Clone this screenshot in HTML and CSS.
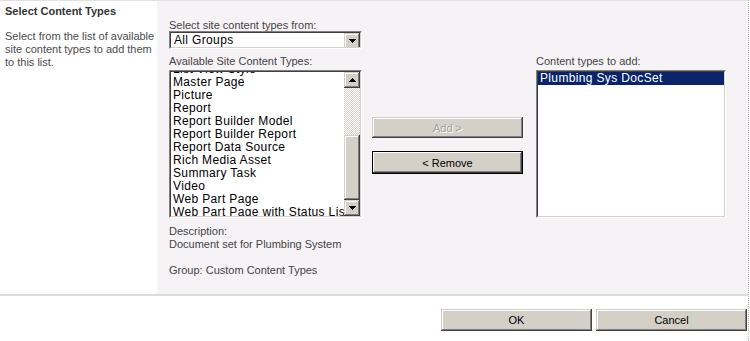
FILE: index.html
```html
<!DOCTYPE html>
<html lang="en">
<head>
    <meta charset="UTF-8">
    <meta name="viewport" content="width=device-width, initial-scale=1.0">
    <title>Add Content Types</title>
    <link rel="stylesheet" href="styles.css">
</head>
<body>
    <div class="page">
        <div class="section">
            <div class="section-info">
                <h3 class="section-title">Select Content Types</h3>
                <p class="section-desc">Select from the list of available site content types to add them to this list.</p>
            </div>
            <div class="section-body">
                <div class="col col-source">
                    <div class="label label-top">Select site content types from:</div>
                    <div class="field dropdown">
                        <div class="field-inner">
                            <span class="dropdown-value">All Groups</span>
                            <span class="sb-btn">
                                <svg width="7" height="4" viewBox="0 0 7 4"><path d="M0 0h7v1h-7z M1 1h5v1h-5z M2 2h3v1h-3z M3 3h1v1h-1z"/></svg>
                            </span>
                        </div>
                    </div>
                    <div class="label label-list">Available Site Content Types:</div>
                    <div class="field listbox">
                        <div class="field-inner">
                            <ul class="items items-scrolled">
                                <li>List View Style</li>
                                <li>Master Page</li>
                                <li>Picture</li>
                                <li>Report</li>
                                <li>Report Builder Model</li>
                                <li>Report Builder Report</li>
                                <li>Report Data Source</li>
                                <li>Rich Media Asset</li>
                                <li>Summary Task</li>
                                <li>Video</li>
                                <li>Web Part Page</li>
                                <li>Web Part Page with Status List</li>
                            </ul>
                            <div class="scrollbar">
                                <span class="sb-btn">
                                    <svg width="7" height="4" viewBox="0 0 7 4"><path d="M3 0h1v1h-1z M2 1h3v1h-3z M1 2h5v1h-5z M0 3h7v1h-7z"/></svg>
                                </span>
                                <span class="sb-track"></span>
                                <span class="sb-thumb"></span>
                                <span class="sb-btn">
                                    <svg width="7" height="4" viewBox="0 0 7 4"><path d="M0 0h7v1h-7z M1 1h5v1h-5z M2 2h3v1h-3z M3 3h1v1h-1z"/></svg>
                                </span>
                            </div>
                        </div>
                    </div>
                    <div class="details">
                        <div>Description:</div>
                        <div>Document set for Plumbing System</div>
                        <div class="details-group">Group: Custom Content Types</div>
                    </div>
                </div>

                <div class="col col-actions">
                    <button class="btn btn-disabled" disabled>Add &gt;</button>
                    <button class="btn btn-default">&lt; Remove</button>
                </div>

                <div class="col col-target">
                    <div class="label label-list">Content types to add:</div>
                    <div class="field listbox">
                        <div class="field-inner">
                            <ul class="items">
                                <li class="selected">Plumbing Sys DocSet</li>
                            </ul>
                        </div>
                    </div>
                </div>
            </div>
        </div>

        <div class="actions">
            <button class="btn btn-wide">OK</button>
            <button class="btn btn-wide">Cancel</button>
        </div>
    </div>
</body>
</html>
```

FILE: styles.css
```css
body {
    margin: 0;
    font-family: "Liberation Sans", Arial, sans-serif;
    font-size: 11px;
    color: #444;
    background: #fff;
}
.page {
    width: 748px;
    height: 341px;
    border-right: 1px dotted #b4b4b4;
}
.section {
    display: flex;
    height: 293px;
    border-top: 1px solid #e2e2e2;
    border-bottom: 2px solid #dcdcdc;
}
.section-info {
    width: 151px;
    padding: 4px 1px 0 5px;
}
.section-title {
    margin: 0;
    font-size: 11px;
    line-height: 13px;
    color: #333;
}
.section-desc {
    margin: 12px 0 0;
    line-height: 13px;
    color: #4c4c4c;
}
.section-body {
    flex: 1;
    display: flex;
    align-items: flex-start;
    background: #f6f3f6;
    padding: 18px 0 0 12px;
}
.col-source {
    width: 193px;
}
.col-actions {
    display: flex;
    flex-direction: column;
    width: 151px;
    margin-left: 10px;
    padding-top: 98px;
}
.col-target {
    width: 190px;
    margin-left: 13px;
    padding-top: 36px;
}
.label {
    line-height: 12px;
    color: #444;
}
.label-list {
    margin-top: 6px;
    margin-bottom: 3px;
}
.col-target .label-list {
    margin-top: 0;
}

/* sunken 3d fields */
.field {
    border: 1px solid;
    border-color: #808080 #fff #fff #808080;
    background: #fff;
}
.field-inner {
    display: flex;
    height: 100%;
    box-sizing: border-box;
    border: 1px solid;
    border-color: #404040 #d4d0c8 #d4d0c8 #404040;
    overflow: hidden;
}
.dropdown {
    height: 18px;
    box-sizing: border-box;
    font-size: 12px;
    letter-spacing: 0.35px;
    color: #000;
}
.dropdown-value {
    flex: 1;
    padding-left: 3px;
    line-height: 14px;
}
.listbox {
    height: 148px;
    box-sizing: border-box;
    font-size: 12px;
    letter-spacing: 0.35px;
    color: #000;
}
.items {
    flex: 1;
    list-style: none;
    margin: 0;
    padding: 0;
    white-space: nowrap;
    overflow: hidden;
}
.items li {
    height: 13px;
    line-height: 13px;
    padding-left: 2px;
}
.items-scrolled {
    margin-top: -9px;
}
.items li.selected {
    background: #0a246a;
    color: #fff;
}

/* classic scrollbar */
.scrollbar {
    display: flex;
    flex-direction: column;
    width: 16px;
}
.sb-btn {
    display: flex;
    align-items: center;
    justify-content: center;
    width: 16px;
    height: 16px;
    flex-shrink: 0;
    background: #d4d0c8;
    box-shadow: inset -1px -1px #404040, inset 1px 1px #d4d0c8, inset -2px -2px #808080, inset 2px 2px #fff;
}
.sb-track {
    height: 47px;
    background-image: repeating-conic-gradient(#d4d0c8 0 25%, #fff 0 50%);
    background-size: 2px 2px;
}
.sb-thumb {
    height: 65px;
    background: #d4d0c8;
    box-shadow: inset -1px -1px #404040, inset 1px 1px #d4d0c8, inset -2px -2px #808080, inset 2px 2px #fff;
}

.details {
    margin-top: 7px;
    line-height: 13px;
    color: #444;
}
.details-group {
    margin-top: 13px;
}

/* classic buttons */
.btn {
    font-family: "Liberation Sans", Arial, sans-serif;
    font-size: 11px;
    color: #000;
    background: #d4d0c8;
    border: none;
    padding: 0;
    height: 21px;
    box-shadow: inset -1px -1px #404040, inset 1px 1px #d4d0c8, inset -2px -2px #808080, inset 2px 2px #fff;
}
.btn-disabled {
    color: #a0a0a0;
    text-shadow: 1px 1px #fff;
}
.btn-default {
    height: 23px;
    margin-top: 13px;
    box-shadow: inset 0 0 0 1px #000, inset -2px -2px #404040, inset 2px 2px #fff, inset -3px -3px #808080;
}
.actions {
    display: flex;
    justify-content: flex-end;
    gap: 4px;
    padding: 13px 1px 0 0;
}
.btn-wide {
    width: 151px;
    height: 22px;
}
```
